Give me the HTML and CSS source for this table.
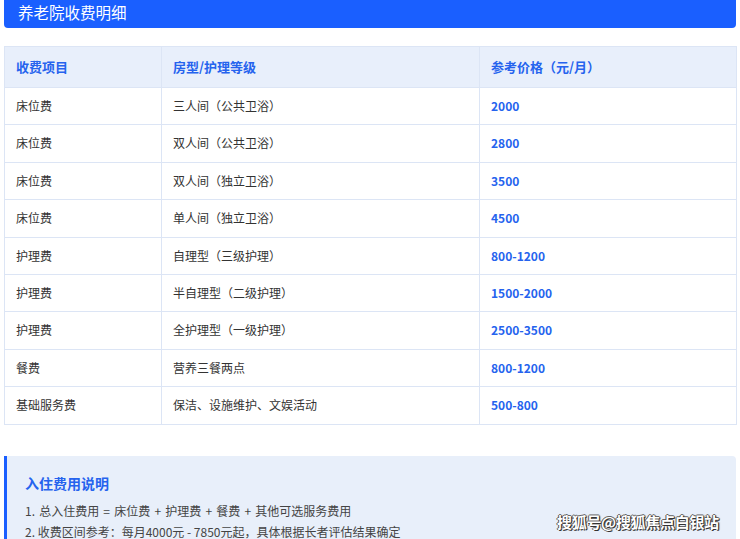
FILE: index.html
```html
<!DOCTYPE html>
<html lang="zh">
<head>
<meta charset="utf-8">
<link rel="stylesheet" href="styles.css">
</head>
<body>
<div class="page">
  <div class="bar">养老院收费明细</div>
  <table class="fees">
    <colgroup><col class="c1"><col class="c2"><col class="c3"></colgroup>
    <thead>
      <tr><th>收费项目</th><th>房型/护理等级</th><th>参考价格（元/月）</th></tr>
    </thead>
    <tbody>
      <tr><td>床位费</td><td>三人间（公共卫浴）</td><td class="price">2000</td></tr>
      <tr><td>床位费</td><td>双人间（公共卫浴）</td><td class="price">2800</td></tr>
      <tr><td>床位费</td><td>双人间（独立卫浴）</td><td class="price">3500</td></tr>
      <tr><td>床位费</td><td>单人间（独立卫浴）</td><td class="price">4500</td></tr>
      <tr><td>护理费</td><td>自理型（三级护理）</td><td class="price">800-1200</td></tr>
      <tr><td>护理费</td><td>半自理型（二级护理）</td><td class="price">1500-2000</td></tr>
      <tr><td>护理费</td><td>全护理型（一级护理）</td><td class="price">2500-3500</td></tr>
      <tr><td>餐费</td><td>营养三餐两点</td><td class="price">800-1200</td></tr>
      <tr><td>基础服务费</td><td>保洁、设施维护、文娱活动</td><td class="price">500-800</td></tr>
    </tbody>
  </table>
  <div class="note">
    <div class="note-title">入住费用说明</div>
    <p class="note-line spaced">1. 总入住费用 = 床位费 + 护理费 + 餐费 + 其他可选服务费用</p>
    <p class="note-line">2. 收费区间参考：每月4000元 - 7850元起，具体根据长者评估结果确定</p>
  </div>
  <div class="watermark">搜狐号@搜狐焦点白银站</div>
</div>
</body>
</html>
```
FILE: styles.css
```css
html, body {
  margin: 0;
  padding: 0;
  background: #ffffff;
}
body {
  font-family: "Noto Sans CJK SC", "Noto Sans", sans-serif;
  color: #333333;
}
.page {
  position: relative;
  width: 740px;
  height: 539px;
  overflow: hidden;
  padding: 0 4px;
  box-sizing: border-box;
}
.bar {
  height: 28px;
  background: #1a5fff;
  color: #ffffff;
  font-size: 15.5px;
  line-height: 24px;
  padding-left: 14px;
  border-radius: 0 0 4px 4px;
}
.fees {
  margin-top: 18px;
  width: 732px;
  border-collapse: collapse;
  table-layout: fixed;
  font-size: 12px;
}
.c1 { width: 157px; }
.c2 { width: 318px; }
.c3 { width: 257px; }
.fees th, .fees td {
  border: 1px solid #dce5f5;
  text-align: left;
  padding: 10px 11px;
  line-height: 16.4px;
}
.fees th {
  background: #e8effb;
  color: #2563ee;
  font-size: 13px;
  font-weight: 700;
  padding: 12px 11px;
  line-height: 16px;
}
.fees td { color: #333333; }
.fees td.price {
  color: #2563ee;
  font-weight: 700;
}
.note {
  margin-top: 31px;
  background: #e8effa;
  border-left: 3px solid #1a5fff;
  border-radius: 0 4px 4px 0;
  padding: 16px 18px 10px;
  height: 84px;
}
.note-title {
  color: #2563ee;
  font-size: 14px;
  font-weight: 700;
  line-height: 22px;
  margin-bottom: 6px;
}
.note-line {
  margin: 0;
  font-size: 12px;
  line-height: 21px;
  color: #444444;
}
.note-line.spaced {
  word-spacing: 1.5px;
}
.watermark {
  position: absolute;
  left: 557px;
  top: 511px;
  font-size: 15px;
  font-weight: 700;
  color: #ffffff;
  letter-spacing: -0.3px;
  text-shadow: 1px 1px 0 #333, -1px 0 0 #555, 0 -1px 0 #666, 1px 0 1px #333;
}
```
